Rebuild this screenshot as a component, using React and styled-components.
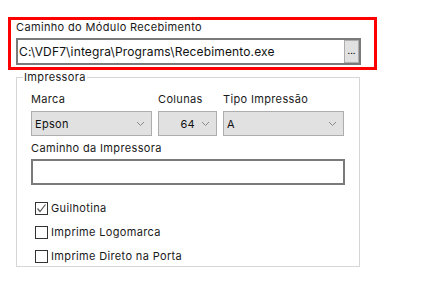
import React from "react";
import styled, { createGlobalStyle } from "styled-components";

const Global = createGlobalStyle`
  * { box-sizing: border-box; }
  body {
    margin: 0;
    background: #fff;
    font-family: Inter, "Noto Sans", sans-serif;
    color: #1a1a1a;
  }
`;

const Page = styled.div`
  padding: 17px 0 0 8px;
  width: 432px;
  height: 308px;
`;

const RedFrame = styled.div`
  width: 369px;
  height: 53px;
  border: 3px solid #f00;
  padding: 0 13px 2px 5px;
  display: flex;
  flex-direction: column;
  gap: 4px;
`;

const Label = styled.div`
  font-size: 11px;
  line-height: 14px;
  letter-spacing: 0.35px;
  white-space: nowrap;
`;

const PathBox = styled.div`
  width: 345px;
  height: 27px;
  border: 2px solid #7a7a7a;
  display: flex;
  align-items: stretch;
`;

const PathText = styled.div`
  flex: 1;
  padding-left: 1px;
  font-size: 12px;
  line-height: 23px;
  letter-spacing: 0.15px;
  color: #111;
  white-space: nowrap;
`;

const Browse = styled.div`
  width: 15px;
  background: #e1e1e1;
  border: 1px solid #adadad;
  font-size: 9px;
  line-height: 19px;
  text-align: center;
  color: #000;
`;

const Group = styled.fieldset`
  margin: 0 0 0 8px;
  width: 344px;
  height: 197px;
  border: 1px solid #d6d6d6;
  padding: 8px 14px 0 14px;
`;

const Legend = styled.legend`
  margin-left: -8px;
  padding: 0 1px;
  font-size: 11px;
  line-height: 14px;
  letter-spacing: 0.35px;
`;

const Row = styled.div`
  display: flex;
  gap: 6px;
`;

const Field = styled.div`
  display: flex;
  flex-direction: column;
  gap: 5px;
  width: ${(p) => p.w}px;
`;

const Select = styled.div`
  height: 25px;
  background: #e1e1e1;
  border: 1px solid #adadad;
  display: flex;
  align-items: center;
  justify-content: ${(p) => (p.right ? "flex-end" : "space-between")};
  gap: 6px;
  padding: 0 6px 0 3px;
  font-size: 11px;
  letter-spacing: 0.3px;
  color: #111;
`;

const TextBox = styled.div`
  margin-top: 4px;
  width: 314px;
  height: 26px;
  border: 2px solid #7a7a7a;
`;

const PrinterField = styled.div`
  margin-top: 5px;
  display: flex;
  flex-direction: column;
`;

const Checks = styled.div`
  margin-top: 11px;
  display: flex;
  flex-direction: column;
`;

const CheckRow = styled.label`
  height: 24px;
  display: flex;
  align-items: center;
  gap: 3px;
  padding-left: 4px;
  font-size: 11px;
  letter-spacing: 0.35px;
`;

const Box = styled.span`
  width: 13px;
  height: 13px;
  border: 1px solid #333;
  background: #fff;
  display: flex;
  align-items: center;
  justify-content: center;
`;

const Chevron = () => (
  <svg width="9" height="6" viewBox="0 0 9 6">
    <polyline points="1,1 4.5,4.5 8,1" fill="none" stroke="#8a8a8a" strokeWidth="1" />
  </svg>
);

const Check = ({ checked, children }) => (
  <CheckRow>
    <Box>
      {checked && (
        <svg width="11" height="11" viewBox="0 0 11 11">
          <polyline points="1.5,5.5 4,8.5 9.5,1.5" fill="none" stroke="#555" strokeWidth="1.2" />
        </svg>
      )}
    </Box>
    {children}
  </CheckRow>
);

export default function App() {
  return (
    <Page>
      <Global />
      <RedFrame>
        <Label>Caminho do Módulo Recebimento</Label>
        <PathBox>
          <PathText>C:\VDF7\integra\Programs\Recebimento.exe</PathText>
          <Browse>...</Browse>
        </PathBox>
      </RedFrame>
      <Group>
        <Legend>Impressora</Legend>
        <Row>
          <Field w={121}>
            <Label>Marca</Label>
            <Select>
              Epson <Chevron />
            </Select>
          </Field>
          <Field w={59}>
            <Label>Colunas</Label>
            <Select right>
              64 <Chevron />
            </Select>
          </Field>
          <Field w={121}>
            <Label>Tipo Impressão</Label>
            <Select>
              A <Chevron />
            </Select>
          </Field>
        </Row>
        <PrinterField>
          <Label>Caminho da Impressora</Label>
          <TextBox />
        </PrinterField>
        <Checks>
          <Check checked>Guilhotina</Check>
          <Check>Imprime Logomarca</Check>
          <Check>Imprime Direto na Porta</Check>
        </Checks>
      </Group>
    </Page>
  );
}
